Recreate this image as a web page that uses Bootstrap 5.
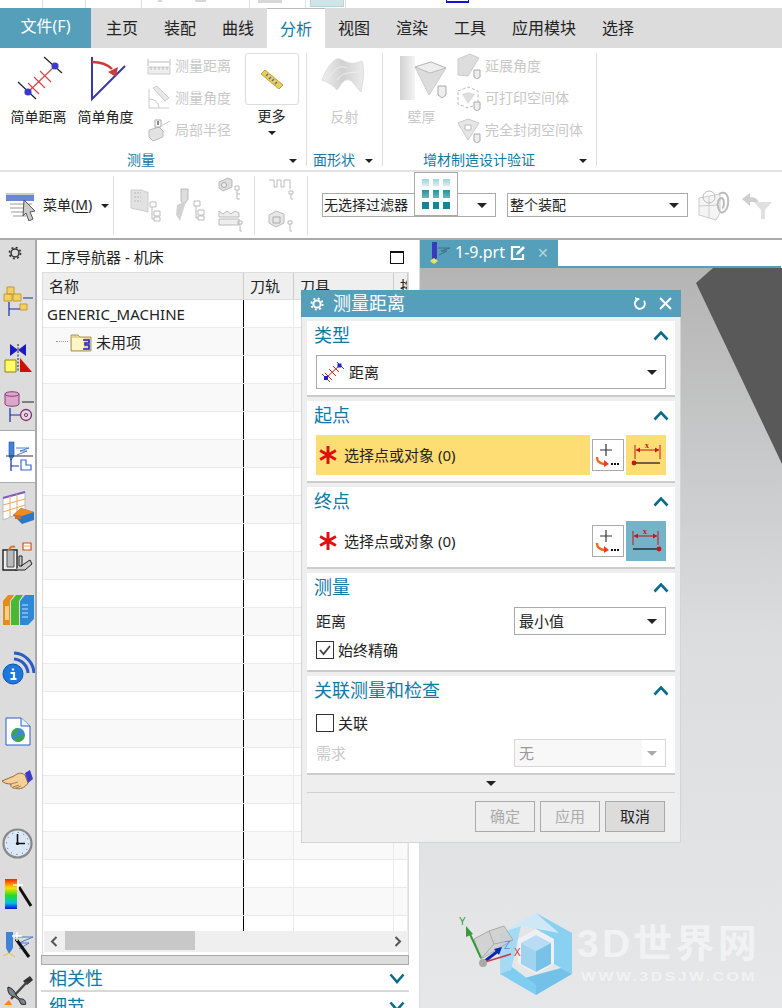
<!DOCTYPE html>
<html>
<head>
    <meta charset="utf-8">
    <title>测量距离</title>
    <link href="https://cdn.jsdelivr.net/npm/bootstrap@5.3.0/dist/css/bootstrap.min.css" rel="stylesheet">
    <style>
        html, body { width: 782px; height: 1008px; overflow: hidden; }
        body { font-family: "Noto Sans", "Noto Sans CJK SC", sans-serif; font-size: 14px; color: #222; background: #fff; line-height: 1.2; }
        .app-shell { width: 782px; height: 1008px; overflow: hidden; }

        /* top strip + tabs */
        .top-strip { height: 8px; flex: none; }
        .top-strip > span { border-right: 1px solid #e0e0e0; height: 8px; display: flex; align-items: flex-start; }
        .strip-a { width: 43px; } .strip-b { width: 43px; } .strip-c { width: 56px; } .strip-d { width: 108px; } .strip-e { width: 56px; }
        .strip-f { width: 4px; border: 0 !important; }
        .strip-blue { width: 34px; height: 7px !important; background: #cfe5ea; border: 1px solid #b5d5dd !important; border-top: 0 !important; }
        .strip-g { width: 2px; }
        .strip-pick { width: 23px; height: 3px !important; margin-left: 100px; border: 1px solid #1111dd !important; border-top: 0 !important; border-bottom-width: 2px !important; }
        .strip-bit { background: #d8d8d8; height: 2px; display: block; }
        .bit-a { width: 4px; margin-left: 16px; } .bit-b { width: 11px; margin-left: 33px; } .bit-c { width: 24px; margin-left: 8px; height: 3px; }
        .tab-bar { height: 40px; background: #dcdcdc; font-size: 16px; flex: none; }
        .file-tab { width: 91px; background: #559fba; color: #fff; font-size: 16px; padding-bottom: 3px; }
        .rib-tab { height: 40px; padding: 3px 0 0; width: 58px; text-align: center; line-height: 35px; }
        .rib-tab.is-on { background: #fff; color: #0d7ba6; border-top: 1px solid #bbb; }
        .rib-tab.is-wide { width: 90px; }
        .rib-tab.is-first { margin-left: 2px; }

        /* ribbon */
        .ribbon { height: 124px; border-bottom: 2px solid #e2e2e2; flex: none; }
        .rib-group { height: 113px; margin-top: 5px; border-right: 1px solid #dedede; position: relative; }
        .grp-measure { width: 307px; padding-left: 5px; } .grp-face { width: 76px; padding-left: 4px; } .grp-add { width: 214px; padding-left: 5px; }
        .rib-big { width: 67px; text-align: center; padding-top: 1px; flex: none; }
        .rib-big svg { display: block; margin: 0 auto 7px; }
        .rib-big .more-box svg { margin: 0; }
        .rib-small { width: 91px; margin-top: -3px; margin-left: 8px; flex: none; white-space: nowrap; }
        .grp-add .rib-small { width: 130px; margin-left: 2px; }
        .rib-row { height: 32px; color: #c8c8c8; gap: 4px; }
        .more-box { width: 54px; height: 52px; border: 1px solid #ddd; border-radius: 3px; margin: -1px auto 3px; }
        .more-caret { height: 16px; }
        .rib-label { position: absolute; bottom: -2px; color: #0d7ba6; line-height: 17px; }
        .lbl-a { left: 127px; } .lbl-b { left: 6px; } .lbl-c { left: 40px; }
        .car-a { left: 289px; } .car-b { left: 58px; } .car-c { left: 196px; }
        .is-off { color: #c8c8c8; }
        .tri { width: 0; height: 0; border-left: 5px solid transparent; border-right: 5px solid transparent; border-top: 5px solid #222; display: inline-block; }
        .tri-sm { border-left-width: 4px; border-right-width: 4px; border-top-width: 4px; }
        .tri-off { border-top-color: #aaa; }
        .grp-caret { position: absolute; bottom: 3px; }

        /* toolbar */
        .tool-bar { height: 68px; border-bottom: 2px solid #aaa; position: relative; flex: none; }
        .tool-sep { width: 1px; height: 59px; background: #dedede; }
        .menu-btn { width: 113px; padding-left: 6px; gap: 5px; padding-top: 1px; }
        .menu-btn u { text-underline-offset: 2px; }
        .tool-cell { width: 140px; padding-left: 16px; gap: 12px; }
        .tool-cell-b { width: 52px; }
        .tool-filter { height: 24px; border: 1px solid #aaa; background: #fff; padding: 0 8px 0 1px; line-height: 22px; }
        .filter-a { width: 174px; margin-left: 14px; }
        .filter-b { width: 181px; margin-left: 11px; padding-left: 2px; }
        .grid-pop { position: absolute; left: 414px; top: 0; width: 44px; height: 44px; background: #fff; border: 1px solid #aaa; padding: 6px 7px; display: grid; grid-template-columns: repeat(3, 1fr); gap: 4px 4px; }
        .grid-pop i { display: block; }
        .g-a { background: linear-gradient(#9fd3d8, #d8eef0); } .g-b { background: linear-gradient(#2d8f9d, #6bb7bf); } .g-c { background: #178497; }

        /* main */
        .work-area { height: 768px; position: relative; flex: none; }
        .side-bar { width: 37px; height: 768px; background: #dcdcdc; border-right: 2px solid #aaa; overflow: hidden; flex: none; }
        .side-item { height: 50px; flex: none; width: 35px; }
        .side-item:nth-child(1) { height: 26px; width: 30px; }
        .side-item:nth-child(2) { margin-top: 11px; }
        .side-item:nth-child(3) { margin-top: 6px; }
        .side-item:nth-child(4) { height: 47px; }
        .side-item:nth-child(5) { height: 53px; width: 37px; background: #fff; border-top: 1px solid #aaa; border-bottom: 1px solid #aaa; position: relative; }
        .side-item:nth-child(8) { margin-top: 2px; }
        .side-item:nth-child(9) { margin-top: 8px; }
        .side-item:nth-child(10) { margin-top: 14px; }
        .side-item:nth-child(11) { margin-top: -2px; }
        .side-item:nth-child(12) { margin-top: 13px; }
        .side-item:nth-child(13) { margin-top: 1px; }
        .side-item:nth-child(14) { margin-top: 1px; }
        .side-item:nth-child(15) { margin-top: -5px; }

        .nav-panel { width: 383px; padding-left: 5px; border-right: 1px solid #ccc; flex: none; }
        .nav-title { height: 32px; padding: 2px 15px 0 4px; font-size: 15px; }
        .max-box { width: 14px; height: 13px; border: 1.5px solid #111; border-top-width: 2px; }
        .tree-wrap { width: 367px; height: 683px; border: 1px solid #ddd; border-bottom: 0; position: relative; overflow: hidden; }
        .tree-head { height: 27px; background: #efefef; border-bottom: 1px solid #ddd; font-size: 15px; }
        .col-name { width: 201px; flex: none; } .col-path { width: 50px; flex: none; } .col-tool { width: 100px; flex: none; } .col-more { width: 14px; flex: none; }
        .tree-head > div { padding-left: 6px; border-right: 1px solid #ccc; line-height: 27px; white-space: nowrap; overflow: hidden; }
        .tree-row { height: 28px; border-bottom: 1px solid #eaeaea; font-size: 15px; }
        .tree-row:nth-child(even) { background: #f9f9f9; }
        .tree-row > div { height: 27px; border-right: 1px solid #eaeaea; line-height: 28px; }
        .tree-row > .col-name { border-right: 1px solid #000; padding-left: 4px; }
        .tree-row > .col-name.lvl-1 { padding-left: 13px; }
        .dots { border-top: 1px dotted #999; width: 12px; margin-right: 2px; }
        .tree-rows { height: 631px; overflow: hidden; }
        .h-scroll { height: 21px; background: #efefef; margin-left: 1px; width: 364px; }
        .h-thumb { position: absolute; left: 21px; top: 0; width: 130px; height: 19px; background: #c8c8c8; }
        .h-arrow { width: 20px; }
        .split-bar { height: 10px; width: 368px; background: #dcdcdc; border: 1px solid #aaa; margin-left: -1px; }
        .fold-row { height: 27px; width: 368px; margin-left: -1px; padding: 2px 4px 0 8px; border-bottom: 2px solid #d8d8d8; color: #0d7ba6; font-size: 18px; }
        .fold-row + .fold-row { border-bottom: 0; }

        /* viewport */
        .view-pane { width: 362px; flex: none; position: relative; border-left: 1px solid #ddd; margin-left: -1px; }
        .doc-tabs { height: 26px; }
        .doc-tab { width: 138px; height: 26px; background: #559fba; color: #fff; font-size: 16px; padding-left: 8px; gap: 5px; }
        .doc-close { color: #b9d4de; font-size: 14px; margin-left: 6px; }
        .doc-line { height: 2px; background: #559fba; }
        .view-canvas { position: absolute; left: 0; top: 28px; width: 363px; height: 740px; background: linear-gradient(#b4b4b4 0, #dcdddf 50%, #e6e7e9 100%); }
        .view-canvas svg { display: block; }
        .wm-name { position: absolute; left: 157px; top: 653px; color: rgba(255,255,255,.5); font: 700 39px/1.2 "Liberation Sans", "Noto Sans CJK SC", sans-serif; white-space: nowrap; letter-spacing: 3.2px; }
        .wm-site { position: absolute; left: 161px; top: 702px; color: rgba(255,255,255,.5); font: 700 12px/1.2 "Liberation Sans", sans-serif; white-space: nowrap; letter-spacing: 1.9px; transform: scaleX(1.32); transform-origin: left; }

        /* dialog */
        .measure-dlg { position: absolute; left: 301px; top: 50px; width: 380px; height: 553px; background: #eee; border: 1px solid #d4d4d4; border-top: 0; padding: 0 5px; }
        .dlg-title { height: 27px; background: #559fba; color: #fff; margin: 0 -6px; padding: 0 9px; font-size: 18px; gap: 9px; }
        .dlg-sec { width: 368px; background: #fff; border-bottom: 2px solid #ccc; padding: 0 9px; margin-top: 4px; }
        .sec-a { height: 76px; } .sec-b { height: 82px; } .sec-c { height: 82px; } .sec-d { height: 99px; } .sec-e { height: 99px; }
        .sec-head { height: 30px; color: #0d7ba6; font-size: 18px; margin: 0 -3px 0 -2px; }
        .dd-box { height: 34px; border: 1px solid #aaa; padding: 0 8px 0 4px; font-size: 15px; background: #fff; }
        .dd-box.is-narrow { width: 152px; height: 28px; }
        .dd-box.is-dis { border-color: #d8d8d8; color: #999; background: linear-gradient(90deg, #f8f8f8 85%, #fff 85%); }
        .pick-row { height: 40px; margin-top: 4px; font-size: 15px; }
        .pick-main { width: 274px; height: 40px; padding-left: 3px; gap: 3px; }
        .pick-main.is-req { background: #ffdd75; }
        .plus-btn { width: 32px; height: 32px; border: 1px solid #aaa; background: #fff; margin: 0 2px; padding: 0; }
        .dot-btn { width: 40px; height: 40px; }
        .dot-btn.is-yel { background: #ffdd75; } .dot-btn.is-blue { background: #75b3c8; }
        .dlg-field { font-size: 15px; }
        .chk-row { height: 24px; gap: 4px; font-size: 15px; }
        .chk-row .form-check-input { width: 18px; height: 18px; margin: 0; border: 1px solid #333; border-radius: 0; background-color: #fff; opacity: 1; }
        .chk-tick { position: absolute; left: 1px; top: 1px; pointer-events: none; }
        .sec-d .chk-row { margin-top: 3px; }
        .sec-e .chk-row { margin-top: 5px; }
        .sec-e .dlg-field { margin-top: 4px; }
        .dlg-more { height: 17px; }
        .dlg-rule { height: 1px; background: #d0d0d0; }
        .dlg-foot { gap: 5px; padding: 8px 10px 0 0; }
        .dlg-btn { width: 60px; height: 31px; padding: 0; border-radius: 0; border: 1px solid #aaa; font-size: 15px; background: #eee; color: #222; }
        .dlg-btn:disabled { background: #eee; color: #aaa; border-color: #aaa; opacity: 1; }
        .dlg-btn.is-cancel { background: #dcdcdc; }
    </style>
</head>
<body>
<div class="app-shell d-flex flex-column">
    <div class="top-strip d-flex align-items-start">
        <span class="strip-a"></span><span class="strip-b"></span><span class="strip-c"></span>
        <span class="strip-d"><i class="strip-bit bit-a"></i><i class="strip-bit bit-b"></i></span>
        <span class="strip-e"><i class="strip-bit bit-c"></i></span>
        <span class="strip-f"></span><span class="strip-blue"></span><span class="strip-g"></span><span class="strip-pick"></span>
    </div>

    <div class="tab-bar d-flex">
        <div class="file-tab d-flex align-items-center justify-content-center">文件(F)</div>
        <div class="rib-tab is-first">主页</div>
        <div class="rib-tab">装配</div>
        <div class="rib-tab">曲线</div>
        <div class="rib-tab is-on">分析</div>
        <div class="rib-tab">视图</div>
        <div class="rib-tab">渲染</div>
        <div class="rib-tab">工具</div>
        <div class="rib-tab is-wide">应用模块</div>
        <div class="rib-tab">选择</div>
    </div>

    <div class="ribbon d-flex">
        <div class="rib-group grp-measure d-flex">
            <div class="rib-big">
                <svg width="56" height="48" viewBox="0 0 56 48">
                    <path d="M33 3 51 19M7 28 25 45" stroke="#222" stroke-width="1.2"/>
                    <path d="M17 38 44 12M17 29 28 40M23 23 34 34M29 17 40 28" stroke="#d04848" stroke-width="1.2"/>
                    <circle cx="44" cy="12" r="3.6" fill="#3c3ccc"/><circle cx="17" cy="38" r="3.6" fill="#3c3ccc"/>
                </svg>
                简单距离
            </div>
            <div class="rib-big">
                <svg width="56" height="48" viewBox="0 0 56 48">
                    <path d="M14 3V45L47 12" fill="none" stroke="#3a3aa5" stroke-width="2"/>
                    <path d="M14 8Q27 8 34 15" fill="none" stroke="#c93c3c" stroke-width="2.4"/>
                    <path d="M30 18 40 13 38 23Z" fill="#c93c3c"/>
                </svg>
                简单角度
            </div>
            <div class="rib-small">
                <div class="rib-row d-flex align-items-center">
                    <svg width="24" height="20" viewBox="0 0 24 20"><path d="M1 3V10M23 3V10M2 6H22" stroke="#bbb" fill="none"/><path d="M1 11H23V18H1Z" fill="#eee" stroke="#ccc"/><path d="M4 11V14M8 11V14M12 11V14M16 11V14M20 11V14" stroke="#bbb"/></svg>
                    测量距离
                </div>
                <div class="rib-row d-flex align-items-center">
                    <svg width="24" height="24" viewBox="0 0 24 24"><path d="M2 3V22H22" fill="none" stroke="#ccc"/><path d="M2 13Q11 13 12 22" fill="none" stroke="#ccc"/><path d="M6 2 10 0 22 12 18 15Z" fill="#e8e8e8" stroke="#ccc"/></svg>
                    测量角度
                </div>
                <div class="rib-row d-flex align-items-center">
                    <svg width="24" height="24" viewBox="0 0 24 24"><path d="M2 12 12 9 16 13V19L6 23 2 19Z" fill="#e2e2e2" stroke="#bbb"/><path d="M8 2H14V9H8Z" fill="#fff" stroke="#aaa"/><path d="M11 3V7" stroke="#888" stroke-width="2"/><path d="M14 8 23 3" stroke="#ccc"/></svg>
                    局部半径
                </div>
            </div>
            <div class="rib-big">
                <div class="more-box d-flex align-items-center justify-content-center">
                    <svg width="24" height="24" viewBox="0 0 24 24"><path d="M1 7 5 3 23 18 19 22Z" fill="#e9cf55" stroke="#a89030" stroke-width=".8"/><path d="M6 9 8 7M9 12 11 10M12 14 14 12M15 17 17 15" stroke="#5566bb" stroke-width="1.4"/></svg>
                </div>
                更多
                <div class="more-caret d-flex align-items-center justify-content-center"><span class="tri tri-sm"></span></div>
            </div>
            <span class="rib-label lbl-a">测量</span>
            <span class="tri tri-sm grp-caret car-a"></span>
        </div>

        <div class="rib-group grp-face">
            <div class="rib-big is-off">
                <svg width="56" height="48" viewBox="0 0 56 48">
                    <defs><linearGradient id="faceGrad" x1="0" x2="1"><stop offset="0" stop-color="#f0f0f0"/><stop offset=".5" stop-color="#d0d0d0"/><stop offset="1" stop-color="#ececec"/></linearGradient></defs>
                    <path d="M5 26C9 15 17 3 23 5 30 8 34 12 45 7 48 18 46 26 44 38 38 32 35 24 29 26 24 28 23 33 20 36 16 31 11 28 5 26Z" fill="url(#faceGrad)" stroke="#ddd"/>
                    <path d="M12 23C18 16 22 10 30 14M20 26C25 18 32 19 43 18" stroke="#eee" fill="none"/>
                </svg>
                反射
            </div>
            <span class="rib-label lbl-b">面形状</span>
            <span class="tri tri-sm grp-caret car-b"></span>
        </div>

        <div class="rib-group grp-add d-flex">
            <div class="rib-big is-off">
                <svg width="56" height="48" viewBox="0 0 56 48">
                    <defs><linearGradient id="wallGrad" x1="0" x2="1"><stop offset="0" stop-color="#d2d2d2"/><stop offset="1" stop-color="#f4f4f4"/></linearGradient></defs>
                    <path d="M6 2H21V46H6Z" fill="url(#wallGrad)"/>
                    <path d="M21 13 37 8 52 14 35 41Z" fill="#dcdcdc" stroke="#ccc"/>
                    <path d="M21 13 37 8 52 14 36 19Z" fill="#eee" stroke="#bbb"/>
                    <path d="M44 32H52V41L48 44 44 41Z" fill="#eee" stroke="#aaa"/>
                </svg>
                壁厚
            </div>
            <div class="rib-small">
                <div class="rib-row d-flex align-items-center">
                    <svg width="24" height="26" viewBox="0 0 24 26"><path d="M1 6 13 1 22 5 11 23 1 22Z" fill="#ddd" stroke="#ccc"/><path d="M17 17H23V24L20 26 17 24Z" fill="#eee" stroke="#aaa"/></svg>
                    延展角度
                </div>
                <div class="rib-row d-flex align-items-center">
                    <svg width="24" height="26" viewBox="0 0 24 26"><path d="M1 6 11 2 21 6V19L11 23 1 19Z" fill="none" stroke="#bbb" stroke-dasharray="3 2"/><path d="M5 9 11 7 18 9 11 19Z" fill="#ddd"/><path d="M17 17H23V24L20 26 17 24Z" fill="#eee" stroke="#aaa"/></svg>
                    可打印空间体
                </div>
                <div class="rib-row d-flex align-items-center">
                    <svg width="24" height="26" viewBox="0 0 24 26"><path d="M1 6 11 2 22 6 11 23Z" fill="#e6e6e6" stroke="#ccc"/><path d="M8 8H14V13H8Z" fill="#fff" stroke="#bbb"/><path d="M17 17H23V24L20 26 17 24Z" fill="#eee" stroke="#aaa"/></svg>
                    完全封闭空间体
                </div>
            </div>
            <span class="rib-label lbl-c">增材制造设计验证</span>
            <span class="tri tri-sm grp-caret car-c"></span>
        </div>
    </div>

    <div class="tool-bar d-flex align-items-center">
        <div class="menu-btn d-flex align-items-center">
            <svg width="32" height="30" viewBox="0 0 32 30">
                <path d="M0 4H28V10H0Z" fill="#6a86d6"/><path d="M0 3H28M4 13H26M4 17H20M5 21H20M7 25H20" stroke="#999"/>
                <path d="M18 9 29 20 24 21 27 28 23 30 20 22 17 25Z" fill="#ccc" stroke="#555"/>
            </svg>
            <span>菜单(<u>M</u>)</span>
            <span class="tri tri-sm ms-1"></span>
        </div>
        <div class="tool-sep"></div>
        <div class="tool-cell d-flex align-items-center is-off">
            <svg width="32" height="34" viewBox="0 0 32 34"><path d="M1 2H12L16 4H18V24L10 22 1 20Z" fill="#e2e2e2" stroke="#ccc"/><path d="M4 5H11M4 9H11M4 13H11" stroke="#bbb" stroke-dasharray="2 1"/><path d="M20 14H26V19H20ZM24 23H30V28H24ZM24 29H30V33H24ZM22 19V31H24" fill="none" stroke="#bbb"/></svg>
            <svg width="32" height="36" viewBox="0 0 32 36"><path d="M7 2H14V12L10 18 7 14Z" fill="#ddd" stroke="#bbb"/><path d="M3 18 12 14 9 24 6 34 2 28Z" fill="#d2d2d2"/><path d="M20 14H26V19H20ZM24 23H30V28H24ZM24 29H30V33H24ZM22 19V31H24" fill="none" stroke="#bbb"/></svg>
            <div class="d-flex flex-column gap-2">
                <svg width="26" height="24" viewBox="0 0 26 24"><path d="M1 5 10 1 14 3V10L5 14 1 11Z" fill="#ddd" stroke="#bbb"/><circle cx="6" cy="8" r="2.5" fill="#eee" stroke="#aaa"/><path d="M17 9H21V13H17ZM19 13V22M19 17H22M19 22H22" fill="none" stroke="#bbb"/></svg>
                <svg width="26" height="24" viewBox="0 0 26 24"><path d="M1 2 5 5 9 2 13 5 17 2 21 4V8H1ZM1 10H21V16H1Z" fill="#eee" stroke="#bbb"/><path d="M20 12H24V15H20ZM22 15V22H24" fill="none" stroke="#bbb"/></svg>
            </div>
        </div>
        <div class="tool-sep"></div>
        <div class="tool-cell-b d-flex flex-column align-items-center gap-2 is-off">
            <svg width="26" height="24" viewBox="0 0 26 24"><path d="M1 3H6V10H9V3H13V10H16V3H22V12" fill="none" stroke="#bbb"/><path d="M21 14H25V17H21ZM23 17V22H25" fill="none" stroke="#bbb"/></svg>
            <svg width="26" height="24" viewBox="0 0 26 24"><path d="M1 6 8 2 16 5V14L8 18 1 14Z" fill="#e6e6e6" stroke="#bbb"/><path d="M5 8H12V14H5Z" fill="none" stroke="#aaa"/><path d="M20 12H24V15H20ZM22 15V22H24" fill="none" stroke="#bbb"/></svg>
        </div>
        <div class="tool-sep"></div>
        <div class="tool-filter filter-a d-flex align-items-center justify-content-between">无选择过滤器<span class="tri"></span></div>
        <div class="tool-filter filter-b d-flex align-items-center justify-content-between">整个装配<span class="tri"></span></div>
        <svg class="ms-2" width="36" height="34" viewBox="0 0 36 34"><path d="M3 10 24 6V25L20 32 3 27Z" fill="#f4f4f4" stroke="#ccc"/><path d="M3 18 22 17M13 8V30" stroke="#ccc"/><circle cx="13" cy="9" r="6" fill="none" stroke="#bbb"/><path d="M23 6C30 2 33 8 32 16 31 24 25 27 23 22 20 14 23 10 26 10 29 12 28 20 26 20" fill="none" stroke="#bbb" stroke-width="2"/></svg>
        <svg class="ms-2" width="32" height="34" viewBox="0 0 32 34"><path d="M2 11 10 5V9C16 9 19 12 19 17 16 14 13 14 10 14V18Z" fill="#cfcfcf"/><path d="M14 14H32L25 22V31H21V22Z" fill="#e0e0e0"/></svg>
        <div class="grid-pop">
            <i class="g-a"></i><i class="g-a"></i><i class="g-a"></i>
            <i class="g-b"></i><i class="g-b"></i><i class="g-b"></i>
            <i class="g-c"></i><i class="g-c"></i><i class="g-c"></i>
        </div>
    </div>

    <div class="work-area d-flex">
        <div class="side-bar d-flex flex-column">
            <div class="side-item d-flex align-items-center justify-content-center">
                <svg width="14" height="14" viewBox="0 0 14 14"><circle cx="7" cy="7" r="4" fill="none" stroke="#333" stroke-width="1.5"/><circle cx="7" cy="7" r="5.6" fill="none" stroke="#333" stroke-width="1.6" stroke-dasharray="2 2.4"/></svg>
            </div>
            <div class="side-item d-flex align-items-center justify-content-center">
                <svg width="32" height="34" viewBox="0 0 32 34"><path d="M5 2H12V9H5ZM2 9H10V16H2ZM11 9H19V16H11ZM18 19H25V25H18Z" fill="#f5d060" stroke="#c09a30"/><path d="M21 13H31M7 17V31M7 24H18" stroke="#1a2aaa" stroke-width="1.2"/></svg>
            </div>
            <div class="side-item d-flex align-items-center justify-content-center">
                <svg width="32" height="32" viewBox="0 0 32 32"><path d="M8 2 16 8 8 14ZM24 2 16 8 24 14Z" fill="#1a1ac4"/><path d="M16 2V30" stroke="#222" stroke-dasharray="2 1.5"/><path d="M3 18H14V30H3Z" fill="#ffff66" stroke="#a07818"/><path d="M18 16 30 30H18Z" fill="#cc1100"/></svg>
            </div>
            <div class="side-item d-flex align-items-center justify-content-center">
                <svg width="32" height="34" viewBox="0 0 32 34"><path d="M3 4C3 1 17 1 17 4V14C17 17 3 17 3 14Z" fill="#dba8cc" stroke="#8a3a7a"/><path d="M3 4C3 7 17 7 17 4" fill="none" stroke="#8a3a7a"/><path d="M20 12H32" stroke="#222"/><path d="M8 18V32M8 25H18" stroke="#1a2aaa" stroke-width="1.2"/><circle cx="24" cy="25" r="5.5" fill="none" stroke="#8a2a7a" stroke-width="1.3"/><circle cx="24" cy="25" r="1.6" fill="none" stroke="#8a2a7a"/></svg>
            </div>
            <div class="side-item d-flex align-items-center justify-content-center">
                <svg width="32" height="34" viewBox="0 0 32 34"><path d="M6 2H11V16L8 20 6 16Z" fill="#3f82d8" stroke="#1a50a8" stroke-width=".6"/><path d="M13 8H26L17 11H24L14 15" fill="none" stroke="#4a80d0"/><path d="M3 16H30" stroke="#333"/><path d="M8 19V31M8 26H16" stroke="#1a2aaa" stroke-width="1.2"/><path d="M18 20H23V25H28V30H18Z" fill="#fff" stroke="#3a6ac8" stroke-width="1.2"/></svg>
            </div>
            <div class="side-item d-flex align-items-center justify-content-center">
                <svg width="33" height="34" viewBox="0 0 33 34"><path d="M2 7 24 1V20L2 29Z" fill="#fff" stroke="#bbb"/><path d="M2 7 24 1" stroke="#7a5ac8" stroke-width="2"/><path d="M2 14 24 8M2 21 24 14M9 5V26M16 3V23" stroke="#f0a860"/><path d="M12 24 20 17 33 21V29L21 33Z" fill="#2a78c8"/><path d="M12 24 20 17 33 21 21 25Z" fill="#f08a20"/><path d="M14 24H20V28H14Z" fill="#d07020"/></svg>
            </div>
            <div class="side-item d-flex align-items-center justify-content-center">
                <svg width="33" height="32" viewBox="0 0 33 32"><path d="M2 8H16V28H2Z" fill="#eee" stroke="#222" stroke-width="1.4"/><path d="M6 8H13V25H6Z" fill="#bbb" stroke="#555"/><path d="M18 14H21V24H18ZM20 24 29 18 31 22 24 28H14" fill="#ccc" stroke="#222"/><path d="M8 8C9 4 12 4 14 5" fill="none" stroke="#e0741c" stroke-width="2"/><path d="M22 1H30V8H22Z" fill="#fff" stroke="#d24a20" stroke-width="1.2"/><path d="M22 4H30" stroke="#f2b030"/></svg>
            </div>
            <div class="side-item d-flex align-items-center justify-content-center">
                <svg width="34" height="32" viewBox="0 0 34 32"><path d="M2 7 7 1H13L9 7V31H2Z" fill="#e58c1a"/><path d="M4 12H8V26H4Z" fill="#f4d088"/><path d="M10 7 15 1H22L18 7V31H10Z" fill="#49b833"/><path d="M19 7 24 1H33V25L27 31H19Z" fill="#2e88d8"/><path d="M21 11H27M21 15H27M21 19H27M21 23H27" stroke="#bfe0fa"/></svg>
            </div>
            <div class="side-item d-flex align-items-center justify-content-center">
                <svg width="34" height="34" viewBox="0 0 34 34"><path d="M13 8A15 15 0 0 1 27 22M13 2A21 21 0 0 1 33 22" fill="none" stroke="#2a5cc8" stroke-width="3"/><circle cx="12" cy="23" r="10" fill="#1c78dc" stroke="#1450a8"/><path d="M12 17.500V19.500M9.500 22H13V28M9.500 28H15.500" stroke="#fff" stroke-width="2.200" fill="none"/></svg>
            </div>
            <div class="side-item d-flex align-items-center justify-content-center">
                <svg width="26" height="30" viewBox="0 0 26 30"><path d="M1 1H16L25 9V28H1Z" fill="#fff" stroke="#2a5cc8"/><path d="M16 1V9H25" fill="#e8f0fb" stroke="#2a5cc8"/><circle cx="13" cy="18" r="7" fill="#3a8ad0"/><path d="M7 18A6 6 0 0 1 13 11L13 15A3 3 0 0 0 10 18ZM19 18A6 6 0 0 1 9 23L12 20A3 3 0 0 0 16 18Z" fill="#3da83a"/></svg>
            </div>
            <div class="side-item d-flex align-items-center justify-content-center">
                <svg width="33" height="24" viewBox="0 0 33 24"><path d="M1 13 13 8C17 5 20 4 24 7L27 15C24 20 18 22 15 20 12 21 9 19 10 16 6 16 3 15 1 13Z" fill="#f4cf9a" stroke="#9a6a30"/><path d="M10 16 17 14M12 19 18 17M15 20 20 18" stroke="#9a6a30" stroke-width=".8"/><path d="M24 5 29 2 32 11 27 15Z" fill="#3a3ac8"/></svg>
            </div>
            <div class="side-item d-flex align-items-center justify-content-center">
                <svg width="31" height="31" viewBox="0 0 31 31"><circle cx="15.5" cy="15.5" r="14" fill="#dbe8f8" stroke="#888" stroke-width="2.2"/><path d="M15.5 6V15.5H23" stroke="#111" stroke-width="1.6" fill="none"/><circle cx="15.5" cy="15.5" r="1.6" fill="#111"/><circle cx="15.5" cy="15.5" r="11" fill="none" stroke="#567" stroke-dasharray="1 4.76"/></svg>
            </div>
            <div class="side-item d-flex align-items-center justify-content-center">
                <svg width="32" height="32" viewBox="0 0 32 32">
                    <defs><linearGradient id="heatGrad" x1="0" x2="0" y1="0" y2="1"><stop offset="0" stop-color="#ff2200"/><stop offset=".3" stop-color="#ffe000"/><stop offset=".55" stop-color="#22dd22"/><stop offset=".8" stop-color="#00c0e8"/><stop offset="1" stop-color="#1010dd"/></linearGradient></defs>
                    <path d="M3 1H15V31H3Z" fill="url(#heatGrad)"/><path d="M17 9 29 28" stroke="#111" stroke-width="3"/><path d="M16 2V12M11 7H21" stroke="#fff" stroke-width="1.4"/>
                </svg>
            </div>
            <div class="side-item d-flex align-items-center justify-content-center">
                <svg width="33" height="30" viewBox="0 0 33 30"><path d="M5 2H12V18L8 24 5 18Z" fill="#3f82d8"/><path d="M14 7H32L18 13H28L18 19" fill="none" stroke="#4a78c8"/><path d="M2 26 8 23 14 27" stroke="#f0c020" fill="none"/><path d="M15 9 28 27" stroke="#111" stroke-width="3"/><path d="M16 2V11M11 6H21" stroke="#fff" stroke-width="1.4"/></svg>
            </div>
            <div class="side-item d-flex align-items-center justify-content-center">
                <svg width="30" height="30" viewBox="0 0 30 30"><path d="M20 6 27 1 30 5 24 10Z" fill="#333"/><path d="M24 7 8 24" stroke="#444" stroke-width="2.4"/><path d="M5 12C9 13 12 16 13 20L17 24C21 23 24 27 22 30L18 29 16 25 12 22C8 22 4 18 5 12Z" fill="#7a8290" stroke="#222"/><path d="M1 30 6 25 9 30Z" fill="#f08a20"/></svg>
            </div>
        </div>

        <div class="nav-panel">
            <div class="nav-title d-flex align-items-center justify-content-between">工序导航器 - 机床<span class="max-box"></span></div>
            <div class="tree-wrap">
                <div class="tree-head d-flex">
                    <div class="col-name">名称</div><div class="col-path">刀轨</div><div class="col-tool">刀具</div><div class="col-more">拖</div>
                </div>
                <div class="tree-rows" id="treeRows"></div>
                <div class="h-scroll d-flex justify-content-between position-relative">
                    <div class="h-arrow d-flex align-items-center justify-content-center"><svg width="8" height="11" viewBox="0 0 8 11"><path d="M6.5 1 2 5.5 6.5 10" fill="none" stroke="#555" stroke-width="2"/></svg></div>
                    <div class="h-thumb"></div>
                    <div class="h-arrow d-flex align-items-center justify-content-center"><svg width="8" height="11" viewBox="0 0 8 11"><path d="M1.5 1 6 5.5 1.5 10" fill="none" stroke="#555" stroke-width="2"/></svg></div>
                </div>
            </div>
            <div class="split-bar"></div>
            <div class="fold-row d-flex align-items-center justify-content-between">相关性<svg width="16" height="11" viewBox="0 0 16 11"><path d="M1.5 1.5 8 9 14.500 1.500" fill="none" stroke="#0b6b8c" stroke-width="2.6"/></svg></div>
            <div class="fold-row d-flex align-items-center justify-content-between">细节<svg width="16" height="11" viewBox="0 0 16 11"><path d="M1.5 1.5 8 9 14.500 1.500" fill="none" stroke="#0b6b8c" stroke-width="2.6"/></svg></div>
        </div>

        <div class="view-pane">
            <div class="doc-tabs d-flex">
                <div class="doc-tab d-flex align-items-center">
                    <svg width="22" height="24" viewBox="0 0 22 24"><path d="M4 1H9V17L6 20 4 17Z" fill="#3a3ac0"/><path d="M10 7H22L13 10H19L11 14" fill="none" stroke="#3b6f88"/><path d="M2 20 6 17 10 20 6 23Z" fill="#f0e060"/></svg>
                    <span>1-9.prt</span>
                    <svg width="16" height="16" viewBox="0 0 16 16"><path d="M10 2H2V14H13V9" fill="none" stroke="#fff" stroke-width="2.2"/><path d="M6 10 7 7 13 1 15 3 9 9Z" fill="#fff"/></svg>
                    <span class="doc-close">✕</span>
                </div>
            </div>
            <div class="doc-line"></div>
            <div class="view-canvas">
                <svg width="363" height="740" viewBox="419 268 363 740">
                    <path d="M695 283 712 268H782V466Z" fill="#595959"/>
                    <!-- logo -->
                    <path d="M535 913 571 933V974L535 954Z" fill="#8ad0f1"/>
                    <path d="M571 974 535 995 520 979 560 968Z" fill="#72c1e9"/>
                    <path d="M535 995 499 974V958L535 985Z" fill="#80cdf2"/>
                    <path d="M499 974V933L520 926 510 970Z" fill="#a6d9f3"/>
                    <path d="M499 933 535 913 558 933 520 926Z" fill="#cfe8f6"/>
                    <path d="M535 929 553 939V964L535 974 517 964V939Z" fill="#eef0f2"/>
                    <path d="M535 935 550 943 535 951 520 943Z" fill="#b7dcf3"/>
                    <path d="M520 943 535 951V972L520 964Z" fill="#9fd3f0"/>
                    <path d="M550 943 535 951V972L550 964Z" fill="#78c1e8"/>
                    <!-- triad -->
                    <path d="M473 939 488 931 503 926 512 940 498 948 480 959Z" fill="#cfcfcf" fill-opacity=".85" stroke="#aaa"/>
                    <path d="M488 931 493 944 480 959M493 944 512 940" fill="none" stroke="#aaa"/>
                    <path d="M480 958 468 932" stroke="#3a9a3a" stroke-width="2"/><path d="M465 926 472 934 465 937Z" fill="#3a9a3a"/>
                    <path d="M484 961 497 951" stroke="#0a2ab0" stroke-width="3"/><path d="M501 947 498 955 493 949Z" fill="#0a2ab0"/>
                    <path d="M484 962 510 954" stroke="#c03c50" stroke-width="1.6"/>
                    <circle cx="482" cy="963" r="4" fill="#aaa"/>
                    <text x="458" y="925" font-family="Liberation Sans, sans-serif" font-size="10" fill="#2a9a3a">Y</text>
                    <text x="503" y="949" font-family="Liberation Sans, sans-serif" font-size="10" fill="#6a8aee">Z</text>
                    <text x="513" y="956" font-family="Liberation Sans, sans-serif" font-size="10" fill="#d03030">X</text>
                </svg>
                <div class="wm-name">3D世界网</div>
                <div class="wm-site">WWW.3DSJW.COM</div>
            </div>
        </div>

        <div class="measure-dlg">
            <div class="dlg-title d-flex align-items-center">
                <svg width="14" height="14" viewBox="0 0 14 14"><circle cx="7" cy="7" r="3.6" fill="none" stroke="#fff" stroke-width="2"/><circle cx="7" cy="7" r="5.600" fill="none" stroke="#fff" stroke-width="2" stroke-dasharray="2 2.400"/></svg>
                <span class="flex-grow-1">测量距离</span>
                <svg class="me-1" width="13" height="13" viewBox="0 0 13 13"><path d="M4 2.500A5 5 0 1 0 9 2" fill="none" stroke="#fff" stroke-width="1.800" transform="rotate(30 6.500 6.500)"/><path d="M2 0 6 2 3 5Z" fill="#fff"/></svg>
                <svg width="13" height="13" viewBox="0 0 13 13"><path d="M1 1 12 12M12 1 1 12" stroke="#fff" stroke-width="2"/></svg>
            </div>

            <div class="dlg-sec sec-a">
                <div class="sec-head d-flex align-items-center justify-content-between">类型<svg width="16" height="10" viewBox="0 0 16 10"><path d="M1.500 8.500 8 1.500 14.500 8.500" fill="none" stroke="#0b6b8c" stroke-width="2.600"/></svg></div>
                <div class="dd-box d-flex align-items-center mt-1">
                    <svg width="24" height="22" viewBox="0 0 24 22"><path d="M16 1 23 8M1 13 9 21" stroke="#222" stroke-width=".8"/><path d="M5 17 19 4M4 12 11 19M8 8 15 15M12 5 18 11" stroke="#dd2020"/><rect x="16.500" y="2.500" width="4" height="4" fill="#2222cc"/><rect x="3" y="15" width="4" height="4" fill="#2222cc"/></svg>
                    <span class="flex-grow-1 ms-1">距离</span><span class="tri"></span>
                </div>
            </div>

            <div class="dlg-sec sec-b">
                <div class="sec-head d-flex align-items-center justify-content-between">起点<svg width="16" height="10" viewBox="0 0 16 10"><path d="M1.500 8.500 8 1.500 14.500 8.500" fill="none" stroke="#0b6b8c" stroke-width="2.600"/></svg></div>
                <div class="pick-row d-flex align-items-center">
                    <div class="pick-main is-req d-flex align-items-center">
                        <svg width="18" height="18" viewBox="0 0 16 16"><path d="M8 0V16M1 4 15 12M15 4 1 12" stroke="#dd0f0f" stroke-width="2.600"/></svg>
                        <span class="ms-1">选择点或对象 (0)</span>
                    </div>
                    <button class="plus-btn d-flex align-items-center justify-content-center" type="button">
                        <svg width="28" height="28" viewBox="0 0 28 28"><path d="M12 3V15M6 9H18" stroke="#333" stroke-width="1.200"/><path d="M3 16C3 21 6 23 12 23" fill="none" stroke="#ee6b1c" stroke-width="2.400"/><path d="M10 19 15 23 10 26Z" fill="#ee3b1c"/><path d="M17 23H25" stroke="#111" stroke-width="2.200" stroke-dasharray="2 1"/></svg>
                    </button>
                    <div class="dot-btn is-yel d-flex align-items-center justify-content-center">
                        <svg width="32" height="28" viewBox="0 0 32 28"><path d="M5 4V18M30 4V18M6 9H29" stroke="#c81414"/><path d="M6 9 10 6.500V11.500ZM29 9 25 6.500V11.500Z" fill="#c81414"/><text x="15" y="7" font-family="Liberation Serif, serif" font-size="8" font-weight="700" fill="#c81414">x</text><path d="M5 22H30" stroke="#111" stroke-width="1.200"/><circle cx="4" cy="22" r="2.400" fill="#c81414"/></svg>
                    </div>
                </div>
            </div>

            <div class="dlg-sec sec-c">
                <div class="sec-head d-flex align-items-center justify-content-between">终点<svg width="16" height="10" viewBox="0 0 16 10"><path d="M1.500 8.500 8 1.500 14.500 8.500" fill="none" stroke="#0b6b8c" stroke-width="2.600"/></svg></div>
                <div class="pick-row d-flex align-items-center">
                    <div class="pick-main d-flex align-items-center">
                        <svg width="18" height="18" viewBox="0 0 16 16"><path d="M8 0V16M1 4 15 12M15 4 1 12" stroke="#dd0f0f" stroke-width="2.600"/></svg>
                        <span class="ms-1">选择点或对象 (0)</span>
                    </div>
                    <button class="plus-btn d-flex align-items-center justify-content-center" type="button">
                        <svg width="28" height="28" viewBox="0 0 28 28"><path d="M12 3V15M6 9H18" stroke="#333" stroke-width="1.200"/><path d="M3 16C3 21 6 23 12 23" fill="none" stroke="#ee6b1c" stroke-width="2.400"/><path d="M10 19 15 23 10 26Z" fill="#ee3b1c"/><path d="M17 23H25" stroke="#111" stroke-width="2.200" stroke-dasharray="2 1"/></svg>
                    </button>
                    <div class="dot-btn is-blue d-flex align-items-center justify-content-center">
                        <svg width="32" height="28" viewBox="0 0 32 28"><path d="M3 4V18M28 4V18M4 9H27" stroke="#c81414"/><path d="M4 9 8 6.500V11.500ZM27 9 23 6.500V11.500Z" fill="#c81414"/><text x="13" y="7" font-family="Liberation Serif, serif" font-size="8" font-weight="700" fill="#c81414">x</text><path d="M3 22H27" stroke="#111" stroke-width="1.200"/><circle cx="29" cy="22" r="2.400" fill="#c81414"/></svg>
                    </div>
                </div>
            </div>

            <div class="dlg-sec sec-d">
                <div class="sec-head d-flex align-items-center justify-content-between">测量<svg width="16" height="10" viewBox="0 0 16 10"><path d="M1.500 8.500 8 1.500 14.500 8.500" fill="none" stroke="#0b6b8c" stroke-width="2.600"/></svg></div>
                <div class="dlg-field d-flex align-items-center justify-content-between mt-1">
                    距离
                    <div class="dd-box is-narrow d-flex align-items-center justify-content-between">最小值<span class="tri"></span></div>
                </div>
                <div class="chk-row d-flex align-items-center">
                    <div class="position-relative d-flex">
                        <input class="form-check-input" type="checkbox">
                        <svg class="chk-tick" width="16" height="16" viewBox="0 0 16 16"><path d="M3 8 6.500 12 13 4" fill="none" stroke="#444" stroke-width="1.800"/></svg>
                    </div>
                    始终精确
                </div>
            </div>

            <div class="dlg-sec sec-e">
                <div class="sec-head d-flex align-items-center justify-content-between">关联测量和检查<svg width="16" height="10" viewBox="0 0 16 10"><path d="M1.500 8.500 8 1.500 14.500 8.500" fill="none" stroke="#0b6b8c" stroke-width="2.600"/></svg></div>
                <div class="chk-row d-flex align-items-center"><input class="form-check-input" type="checkbox">关联</div>
                <div class="dlg-field d-flex align-items-center justify-content-between">
                    <span class="is-off">需求</span>
                    <div class="dd-box is-narrow is-dis d-flex align-items-center justify-content-between">无<span class="tri tri-off"></span></div>
                </div>
            </div>

            <div class="dlg-more d-flex align-items-center justify-content-center"><span class="tri"></span></div>
            <div class="dlg-rule"></div>
            <div class="dlg-foot d-flex justify-content-end">
                <button class="btn dlg-btn" disabled>确定</button>
                <button class="btn dlg-btn" disabled>应用</button>
                <button class="btn dlg-btn is-cancel">取消</button>
            </div>
        </div>
    </div>
</div>

<script>
    // tree rows: two real items, the rest empty
    const rows = document.getElementById("treeRows");
    for (let i = 0; i < 23; i++) {
        const row = document.createElement("div");
        row.className = "tree-row d-flex";
        let name = "";
        if (i === 0) name = "GENERIC_MACHINE";
        if (i === 1) name = '<span class="d-flex align-items-center h-100"><span class="dots"></span><svg width="22" height="20" viewBox="0 0 22 20" class="me-1"><path d="M1 3H8L10 5H21V19H1Z" fill="#e8d48a" stroke="#a89a60"/><path d="M2 6H14V18H2Z" fill="#fff6c8"/><path d="M13 8H19V11H15V13H19V17H13" fill="none" stroke="#2222dd" stroke-width="1.600"/></svg>未用项</span>';
        row.innerHTML = `<div class="col-name${i === 1 ? " lvl-1" : ""}">${name}</div><div class="col-path"></div><div class="col-tool"></div><div class="col-more"></div>`;
        rows.appendChild(row);
    }
</script>
</body>
</html>
